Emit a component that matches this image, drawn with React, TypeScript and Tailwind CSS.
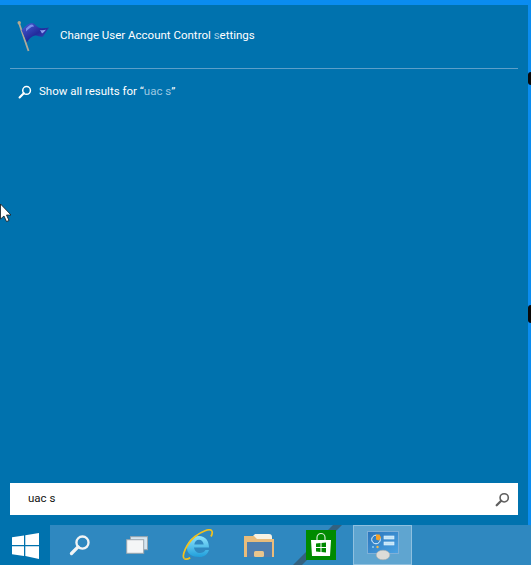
const font = { fontFamily: 'Roboto, "Open Sans", sans-serif' };

function SearchGlass({ className, color }: { className: string; color: string }) {
  return (
    <svg viewBox="0 0 16 16" className={className} fill="none" stroke={color}>
      <circle cx="9.8" cy="6.2" r="4.4" strokeWidth="1.7" />
      <path d="M6.6 9.4 1.8 14.2" strokeWidth="2.4" strokeLinecap="round" />
    </svg>
  );
}

function UacFlag() {
  return (
    <svg viewBox="0 0 34 34" className="w-[34px] h-[34px]">
      <defs>
        <linearGradient id="flag" x1="0" y1="0" x2="1" y2="1">
          <stop offset="0" stopColor="#4a62d8" />
          <stop offset="0.55" stopColor="#222a9c" />
          <stop offset="1" stopColor="#4654c8" />
        </linearGradient>
      </defs>
      <path d="M2 3 11.5 31" stroke="#b0aa98" strokeWidth="1.8" />
      <circle cx="2.2" cy="2.8" r="1.7" fill="#b5a98e" />
      <path
        d="M4.500 10C8 7 11 3 15 3c3 0 4 4 8 5 3 .6 6 .3 9-.5-2 3-4 6-6 9-3 1-5-1.500-8-1-3 .5-6 3-8 7Z"
        fill="url(#flag)"
      />
      <path d="M23 10c2 .5 4 .3 6-.2-1.500 1.500-2.500 3-4 3.700Z" fill="#8fa0f0" />
      <path d="M9 8.500c2-2 4-4 6-4 1 0 1.500 1 2 2-3 0-5 2-8 5Z" fill="#7a90ea" />
    </svg>
  );
}

function WindowsLogo() {
  return (
    <svg viewBox="0 0 27 26" className="w-[27px] h-[26px]" fill="#ffffff">
      <path d="M0 4.200 12 2.500V12H0Z" />
      <path d="M13.300 2.300 27 0V12H13.300Z" />
      <path d="M0 13.300H12V22.900L0 21.200Z" />
      <path d="M13.300 13.300H27V26L13.300 23.100Z" />
    </svg>
  );
}

function TaskViewIcon() {
  return (
    <svg viewBox="0 0 22 18" className="w-[22px] h-[18px]">
      <rect x="4.500" y="0.700" width="17" height="13" fill="#d7e6f0" stroke="#9aa6ad" />
      <rect x="0.700" y="3.700" width="17" height="13.600" fill="#f4f6f7" stroke="#9aa6ad" />
    </svg>
  );
}

function IeIcon() {
  return (
    <svg viewBox="0 0 32 32" className="w-[32px] h-[32px]">
      <defs>
        <linearGradient id="ie" x1="0" y1="0" x2="0" y2="1">
          <stop offset="0" stopColor="#8fe3fb" />
          <stop offset="1" stopColor="#1f9fdc" />
        </linearGradient>
      </defs>
      <path
        d="M5 19.500C5 12 10.500 7 17 7c6.500 0 10 5 10 11.500H12c.5 3.500 3 5.500 6 5.500 2.500 0 4.500-1 5.500-3h3.500c-1.500 4.500-5 7-9.500 7C10 28 5 24.500 5 19.500ZM12.300 15.500h9.400C21.200 12.500 19.500 10.800 17 10.800c-2.500 0-4.200 1.700-4.700 4.700Z"
        fill="url(#ie)"
        fillRule="evenodd"
      />
      <path
        d="M2.200 29.500C-.500 27 4 15 13 7.500 20 2 27.500-.5 29.500 1.500c1.300 1.300.8 3.500-.5 6"
        fill="none"
        stroke="#f3c21c"
        strokeWidth="1.700"
      />
      <path d="M2.200 29.500c1.200 1.200 3.500.7 6-.8" fill="none" stroke="#f3c21c" strokeWidth="1.700" />
    </svg>
  );
}

function FolderIcon() {
  return (
    <svg viewBox="0 0 30 24" className="w-[30px] h-[24px]">
      <path d="M0 3h9l2-2h14q3 0 3 3v3H0Z" fill="#f7f3e4" />
      <path d="M0 3h10l3 3h17v18H0Z" fill="#e9bc7b" />
      <rect x="3" y="9" width="25" height="15" fill="#4f7fb0" />
      <rect x="10" y="18" width="10" height="6" rx="1.500" fill="#e9c58d" />
    </svg>
  );
}

function StoreIcon() {
  return (
    <div className="w-[30px] h-[30px] bg-[#008a00] flex items-center justify-center">
      <svg viewBox="0 0 22 24" className="w-[22px] h-[24px]">
        <path d="M7 7V4.500a4 4 0 0 1 8 0V7" fill="none" stroke="#cfe8cf" strokeWidth="1.200" />
        <path d="M1 7h20l-1 16H2Z" fill="#ffffff" />
        <path d="M6 10.500 10.500 10v4H6ZM11.500 10 16 9.500V14h-4.500ZM6 15h4.500v4L6 18.500ZM11.500 15H16v4.500l-4.500-.5Z" fill="#008a00" />
      </svg>
    </div>
  );
}

function ControlPanelIcon() {
  return (
    <svg viewBox="0 0 32 30" className="w-[32px] h-[30px]">
      <defs>
        <linearGradient id="cp" x1="0" y1="0" x2="1" y2="1">
          <stop offset="0" stopColor="#2a74bb" />
          <stop offset="1" stopColor="#4aa3e3" />
        </linearGradient>
      </defs>
      <rect x="0.500" y="0.500" width="31" height="22" fill="url(#cp)" stroke="#7fb0d8" />
      <circle cx="9" cy="8.500" r="4.300" fill="none" stroke="#e8f4ff" strokeWidth="1" />
      <path d="M9 3.500h3.500l1.500 3-2 3-3-1Z" fill="#f5a12a" />
      <rect x="17" y="5" width="10" height="3" fill="#bfe3f7" stroke="#e8f4ff" strokeWidth="0.600" />
      <rect x="17" y="11" width="10" height="3" fill="#bfe3f7" stroke="#e8f4ff" strokeWidth="0.600" />
      <circle cx="6" cy="16" r="1" fill="#8fd0f5" />
      <circle cx="10.500" cy="16" r="1.200" fill="#f5b84a" />
      <ellipse cx="16" cy="24" rx="6.800" ry="4.800" fill="#dcdcd8" stroke="#a8a8a4" strokeWidth="0.500" />
    </svg>
  );
}

function Cursor() {
  return (
    <svg viewBox="0 0 12 20" className="w-[12px] h-[20px]">
      <path d="M.5 1v15l3.500-3 2.500 5.500 2.500-1-2.500-5.500h4.500Z" fill="#ffffff" stroke="#1a1a1a" strokeWidth="0.800" />
    </svg>
  );
}

export default function App() {
  return (
    <div className="relative w-[531px] h-[565px] overflow-hidden flex flex-col bg-[#0a8cf0]" style={font}>
      <div className="h-[5px] shrink-0" />
      <div className="flex-1 flex min-h-0">
        <div className="relative w-[528px] bg-[#0072ae] flex flex-col px-[10px]">
          <div className="flex items-center h-[63px] pl-[7px] gap-[9px]">
            <div className="mt-[1px]"><UacFlag /></div>
            <span className="text-[11.5px] text-white -mt-[2px]">
              Change User Account Control <span className="text-[#9cc8e2]">s</span>ettings
            </span>
          </div>
          <div className="w-[508px] h-px bg-[#5c9fc9]" />
          <div className="flex items-center h-[46px] pl-[8px] gap-[7px]">
            <SearchGlass className="w-[14px] h-[14px]" color="#ffffff" />
            <span className="text-[11.5px] text-white -mt-[1px] whitespace-pre">
              Show all results for “<span className="text-[#9cc8e2]">uac s</span>”
            </span>
          </div>
          <div className="flex-1" />
          <div className="h-[32px] mb-[10px] w-[508px] bg-white flex items-center justify-between pl-[18px] pr-[8px]">
            <span className="text-[11.5px] text-[#111111]">uac s</span>
            <SearchGlass className="w-[15px] h-[15px]" color="#5f5f5f" />
          </div>
          <div className="absolute left-0 top-[198px]">
            <Cursor />
          </div>
        </div>
        <div className="relative flex-1">
          <div className="absolute left-0 top-[67px] w-[3px] h-[13px] bg-[#0a0a0a] rounded-l-sm" />
          <div className="absolute left-0 top-[300px] w-[3px] h-[18px] bg-[#0a0a0a] rounded-l-full" />
        </div>
      </div>
      <div className="relative h-[40px] shrink-0 flex bg-[#2f88c0]">
        <div className="w-[50px] bg-[#0072ae] flex items-center justify-center">
          <div className="mt-[1px] ml-[1px]"><WindowsLogo /></div>
        </div>
        <svg viewBox="0 0 60 40" className="absolute left-[292px] top-0 w-[60px] h-[40px]">
          <path d="M41 0H50L10 40H1Z" fill="#33617f" />
        </svg>
        <div className="relative flex items-center h-full">
          <div className="w-[60px] flex justify-center">
            <SearchGlass className="w-[22px] h-[22px]" color="#f2f4f5" />
          </div>
          <div className="w-[60px] flex justify-center -ml-[3px]"><TaskViewIcon /></div>
          <div className="w-[60px] flex justify-center ml-[1px]"><IeIcon /></div>
          <div className="w-[60px] flex justify-center ml-[1px]"><FolderIcon /></div>
          <div className="w-[60px] flex justify-center ml-[2px]"><StoreIcon /></div>
          <div className="w-[59px] h-[40px] ml-[2px] flex items-center justify-center bg-[#5fa5d0] border border-[#8fc0df]">
            <div className="mt-[2px]"><ControlPanelIcon /></div>
          </div>
        </div>
      </div>
    </div>
  );
}
